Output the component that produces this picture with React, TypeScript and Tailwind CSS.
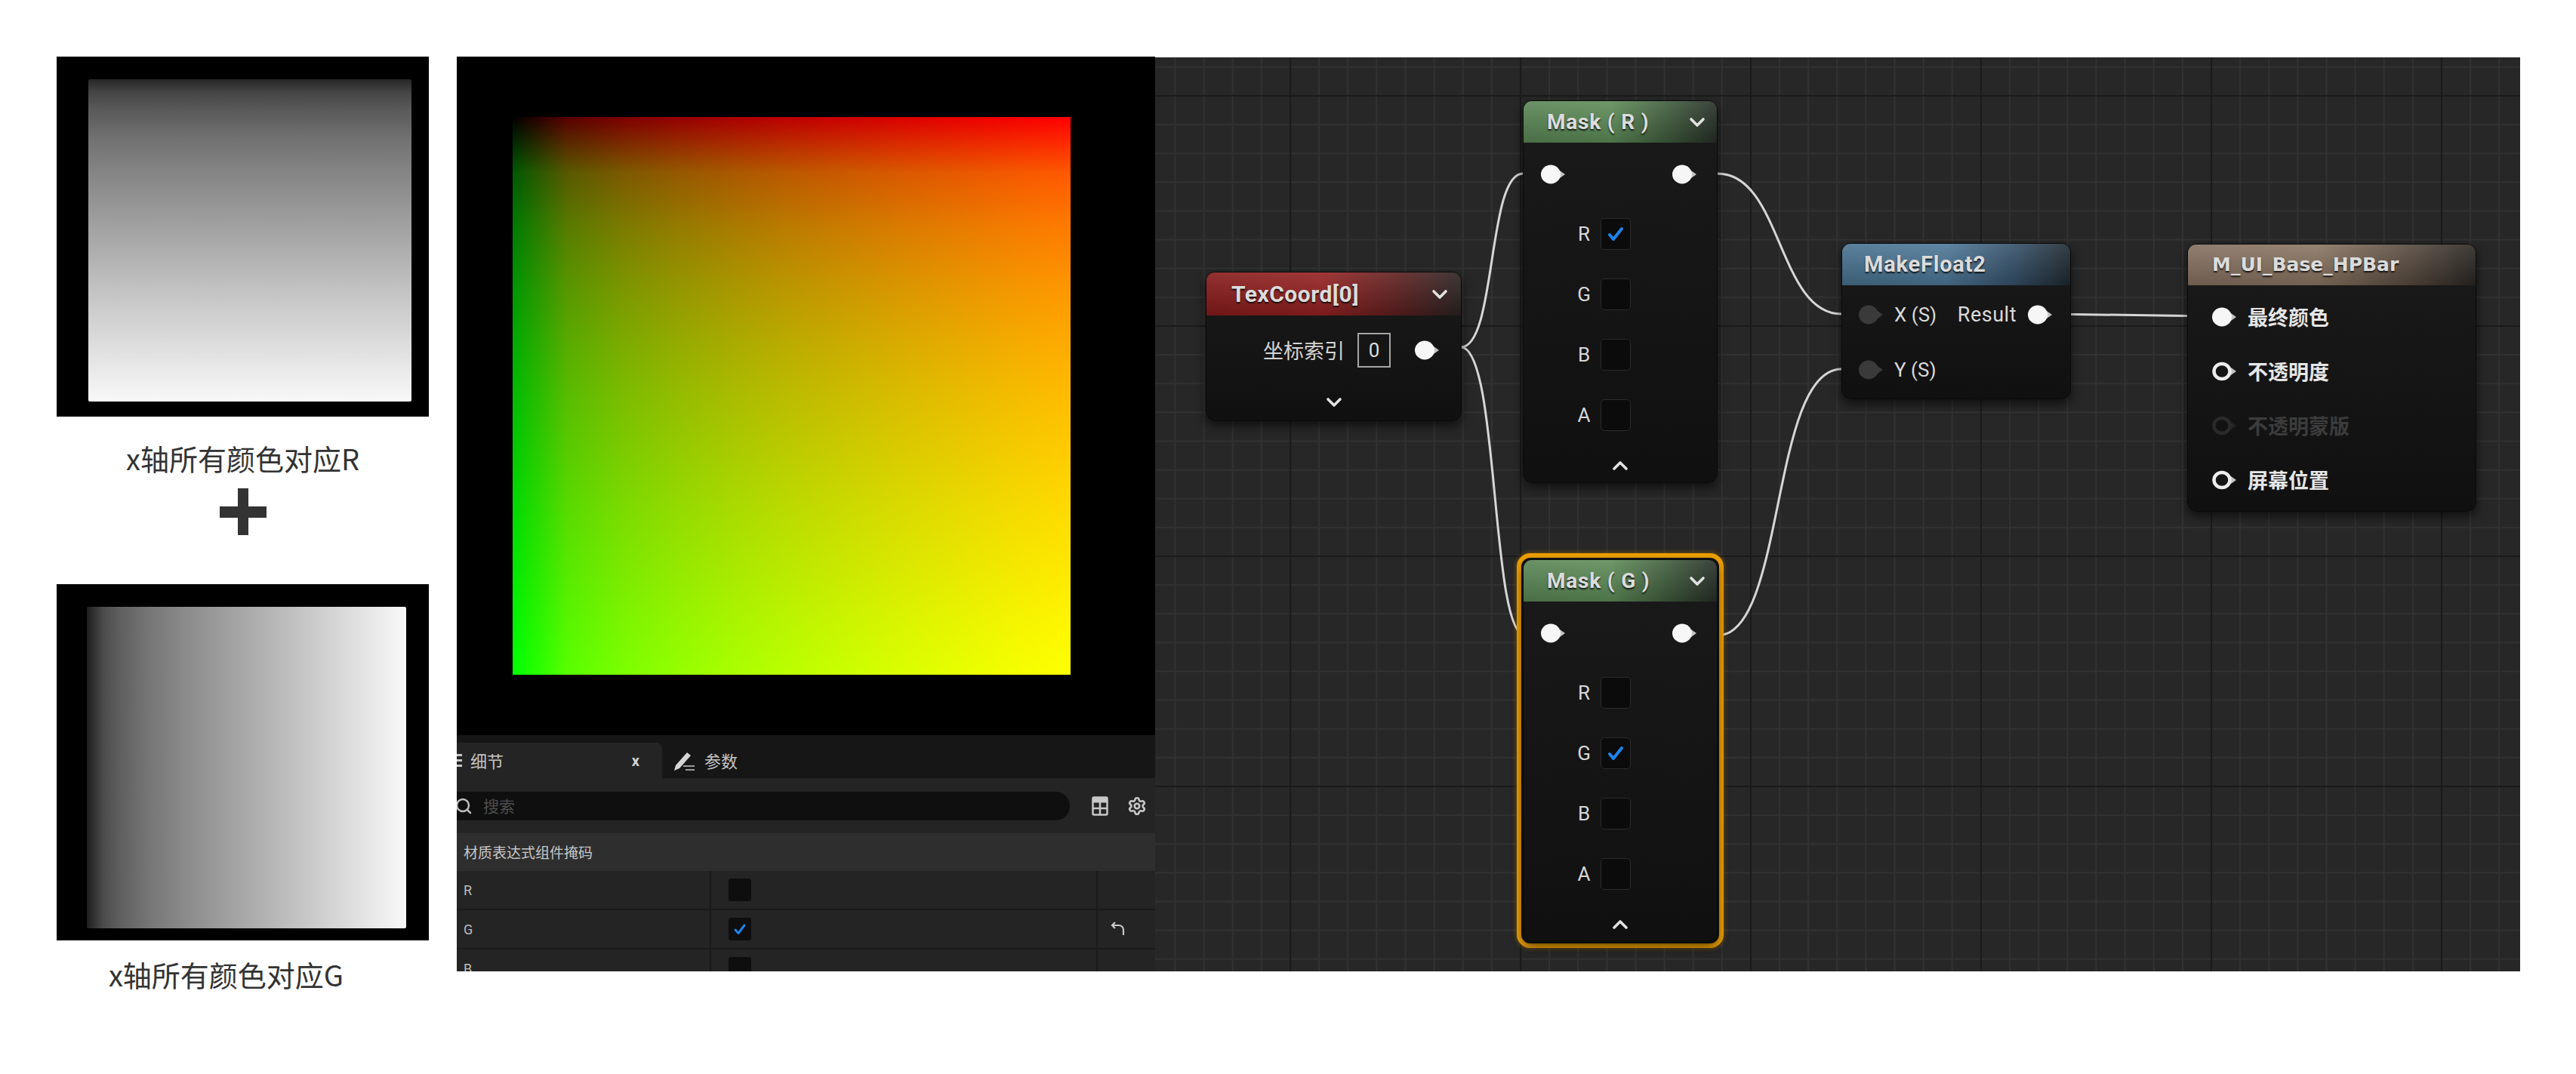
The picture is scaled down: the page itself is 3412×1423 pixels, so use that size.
import React from "react";
import { Search, Settings } from "lucide-react";

function Chevron({ up = false }: { up?: boolean }) {
  return (
    <svg width="24" height="14" viewBox="0 0 24 14" className="shrink-0">
      <path
        d={up ? "M4 12 L12 4 L20 12" : "M4 3 L12 11 L20 3"}
        fill="none"
        stroke="#e2e2e2"
        strokeWidth="3.6"
        strokeLinecap="round"
        strokeLinejoin="round"
      />
    </svg>
  );
}

function Check({ on = false }: { on?: boolean }) {
  return (
    <div className="w-[40px] h-[42px] rounded-[5px] bg-[#0b0b0b] border border-[#2b2b2b] flex items-center justify-center shrink-0">
      {on && (
        <svg width="26" height="26" viewBox="0 0 26 26">
          <path d="M5 14 L10 20 L21 6" fill="none" stroke="#1d84ee" strokeWidth="4" strokeLinecap="round" strokeLinejoin="round" />
        </svg>
      )}
    </div>
  );
}

function Pin({ kind }: { kind: "white" | "dark" | "ring" | "dim" }) {
  const tri = kind === "dark" ? "#3a3a3a" : kind === "dim" ? "#262626" : "#c4c4c4";
  return (
    <svg width="34" height="28" viewBox="0 0 34 28" className="shrink-0">
      <path d="M25 9 L32 14 L25 19 Z" fill={tri} />
      {kind === "white" && <ellipse cx="13" cy="14" rx="13" ry="12.5" fill="#f6f6f6" />}
      {kind === "dark" && <ellipse cx="13" cy="14" rx="13" ry="12.5" fill="#3a3a3a" />}
      {kind === "ring" && <ellipse cx="13" cy="14" rx="10.5" ry="10" fill="#151515" stroke="#ededed" strokeWidth="4.5" />}
      {kind === "dim" && <ellipse cx="13" cy="14" rx="10.5" ry="10" fill="#121212" stroke="#2a2a2a" strokeWidth="4.5" />}
    </svg>
  );
}

function MaskNode({ channel }: { channel: "R" | "G" }) {
  const rows: { l: string; on: boolean }[] = [
    { l: "R", on: channel === "R" },
    { l: "G", on: channel === "G" },
    { l: "B", on: false },
    { l: "A", on: false },
  ];
  return (
    <div className="w-[258px] h-[507px] rounded-[12px] overflow-hidden bg-[linear-gradient(to_bottom,#1a1a1a,#101010)] border border-[#0a0a0a] shadow-[0_6px_14px_rgba(0,0,0,0.6)] flex flex-col">
      <div className="h-[55px] shrink-0 flex items-center justify-between pl-[31px] pr-[14px] bg-[linear-gradient(to_bottom,rgba(255,255,255,0.10),rgba(0,0,0,0.18)),linear-gradient(to_right,#5a8655_0%,#5e8c58_45%,#3f5b3c_75%,#262e27_100%)]">
        <span className="font-['Roboto',sans-serif] font-bold text-[28px] tracking-[0.8px] text-[#dcdcdc] [text-shadow:0_2px_2px_rgba(0,0,0,0.8)]">
          Mask ( {channel} )
        </span>
        <Chevron />
      </div>
      <div className="h-[40px] mt-[22px] shrink-0 flex items-center justify-between pl-[23px] pr-[25px]">
        <Pin kind="white" />
        <Pin kind="white" />
      </div>
      <div className="mt-[19px] flex flex-col">
        {rows.map((r) => (
          <div key={r.l} className="h-[80px] flex items-center pl-[70px]">
            <span className="w-[20px] text-center font-['Roboto',sans-serif] text-[26px] text-[#d8d8d8]">{r.l}</span>
            <div className="ml-[12px]">
              <Check on={r.on} />
            </div>
          </div>
        ))}
      </div>
      <div className="mt-[19px] flex justify-center">
        <Chevron up />
      </div>
    </div>
  );
}

function LeftColumn() {
  return (
    <div className="w-[493px] flex flex-col items-center shrink-0">
      <div className="w-[493px] h-[477px] bg-black pl-[42px] pr-[23px] pt-[30px] pb-[20px]">
        <div className="w-full h-full rounded-[2px] bg-[linear-gradient(to_bottom,#262626_0%,#454545_4%,#585858_9%,#707070_18%,#838383_28%,#949494_38%,#a5a5a5_48%,#b6b6b6_58%,#c7c7c7_68%,#d8d8d8_79%,#e9e9e9_90%,#f8f8f8_100%)]" />
      </div>
      <div className="mt-[30px] text-[38px] leading-[50px] text-[#333333] font-['Noto_Sans_CJK_SC',sans-serif]">
        x轴所有颜色对应R
      </div>
      <svg className="mt-[15px]" width="62" height="62" viewBox="0 0 62 62">
        <rect x="0" y="24" width="62" height="15" fill="#333333" />
        <rect x="24" y="0" width="14" height="62" fill="#333333" />
      </svg>
      <div className="mt-[65px] w-[493px] h-[472px] bg-black pl-[40px] pr-[30px] pt-[30px] pb-[16px]">
        <div className="w-full h-full rounded-[2px] bg-[linear-gradient(to_right,#1e1e1e_0%,#4a4a4a_5%,#5e5e5e_10%,#777777_20%,#898989_30%,#999999_40%,#a9a9a9_50%,#b9b9b9_60%,#c9c9c9_70%,#d9d9d9_80%,#e9e9e9_90%,#f8f8f8_100%)]" />
      </div>
      <div className="mt-[20px] pr-[44px] text-[38px] leading-[50px] text-[#333333] font-['Noto_Sans_CJK_SC',sans-serif]">
        x轴所有颜色对应G
      </div>
    </div>
  );
}

function Details() {
  const rows: { l: string; on: boolean; reset: boolean }[] = [
    { l: "R", on: false, reset: false },
    { l: "G", on: true, reset: true },
    { l: "B", on: false, reset: false },
  ];
  return (
    <div className="flex-1 bg-[#242424] flex flex-col overflow-hidden font-['Noto_Sans_CJK_SC',sans-serif]">
      <div className="h-[57px] bg-[#161616] flex items-end shrink-0">
        <div className="w-[272px] h-[47px] bg-[#242424] rounded-tr-[8px] flex items-center pr-[30px] overflow-hidden">
          <svg width="20" height="24" viewBox="0 0 20 24" className="-ml-[11px] shrink-0">
            <rect x="2" y="3" width="16" height="3" fill="#c8c8c8" />
            <rect x="2" y="10" width="16" height="3" fill="#c8c8c8" />
            <rect x="2" y="17" width="16" height="3" fill="#c8c8c8" />
          </svg>
          <span className="ml-[9px] text-[22px] text-[#c4c4c4]">细节</span>
          <span className="ml-auto text-[20px] font-bold text-[#d0d0d0] font-['Roboto',sans-serif]">x</span>
        </div>
        <div className="h-[47px] flex items-center pl-[13px]">
          <svg width="32" height="30" viewBox="0 0 32 30" className="shrink-0">
            <path d="M3 28 L5 21 L20 4 L25 8 L10 25 Z" fill="#d6d6d6" />
            <path d="M15 22 H30 M18 27 H30" stroke="#9a9a9a" strokeWidth="2" />
          </svg>
          <span className="ml-[11px] text-[22px] text-[#c4c4c4]">参数</span>
        </div>
      </div>
      <div className="h-[73px] flex items-center shrink-0">
        <div className="w-[812px] h-[38px] bg-[#0f0f0f] rounded-r-full flex items-center">
          <Search size={24} strokeWidth={2.5} color="#bdbdbd" className="-ml-[3px]" />
          <span className="ml-[14px] text-[21px] text-[#4e4e4e]">搜索</span>
        </div>
        <svg width="22" height="26" viewBox="0 0 22 26" className="ml-[29px] shrink-0">
          <rect x="1.5" y="1.5" width="19" height="23" rx="1.5" fill="none" stroke="#c8c8c8" strokeWidth="2.5" />
          <rect x="1.5" y="1.5" width="19" height="7" fill="#c8c8c8" />
          <path d="M1.5 16 H20.5 M11 8 V24.5" stroke="#c8c8c8" strokeWidth="2.5" />
        </svg>
        <Settings size={26} strokeWidth={2.4} color="#c8c8c8" className="ml-[25px]" />
      </div>
      <div className="h-[50px] bg-[#2e2e2e] flex items-center pl-[9px] text-[19px] text-[#c8c8c8] shrink-0">
        材质表达式组件掩码
      </div>
      {rows.map((r) => (
        <div key={r.l} className="h-[52px] shrink-0 flex border-b-2 border-[#1a1a1a]">
          <div className="w-[337px] border-r-2 border-[#1a1a1a] flex items-center pl-[9px] text-[18px] text-[#bdbdbd] font-['Roboto',sans-serif]">
            {r.l}
          </div>
          <div className="w-[512px] border-r-2 border-[#1a1a1a] flex items-center pl-[23px]">
            <div className="w-[30px] h-[30px] rounded-[3px] bg-[#0e0e0e] flex items-center justify-center">
              {r.on && (
                <svg width="20" height="20" viewBox="0 0 20 20">
                  <path d="M4 11 L8 15.5 L16 5" fill="none" stroke="#1d84ee" strokeWidth="3" strokeLinecap="round" strokeLinejoin="round" />
                </svg>
              )}
            </div>
          </div>
          <div className="flex-1 flex items-center pl-[16px]">
            {r.reset && (
              <svg width="22" height="24" viewBox="0 0 22 24">
                <path d="M3 7 H12 A6 6 0 0 1 18 13 V20" fill="none" stroke="#c8c8c8" strokeWidth="2.2" />
                <path d="M7 3 L3 7 L7 11" fill="none" stroke="#c8c8c8" strokeWidth="2.2" />
              </svg>
            )}
          </div>
        </div>
      ))}
    </div>
  );
}

function MiddlePanel() {
  return (
    <div className="w-[925px] h-[1212px] flex flex-col shrink-0">
      <div className="h-[899px] shrink-0 bg-black pl-[74px] pt-[80px]">
        <div className="w-[739px] h-[739px] bg-blend-screen bg-[linear-gradient(to_right,#000000_0%,#590000_10%,#7c0000_20%,#950000_30%,#aa0000_40%,#bc0000_50%,#cb0000_60%,#da0000_70%,#e70000_80%,#f40000_90%,#ff0000_100%),linear-gradient(to_bottom,#000000_0%,#005900_10%,#007c00_20%,#009500_30%,#00aa00_40%,#00bc00_50%,#00cb00_60%,#00da00_70%,#00e700_80%,#00f400_90%,#00ff00_100%)]" />
      </div>
      <Details />
    </div>
  );
}

function Graph() {
  return (
    <div className="relative w-[1808px] h-[1211px] mt-[1px] overflow-hidden shrink-0 bg-[#272727] [background-image:linear-gradient(to_right,#1a1a1a_2px,transparent_2px),linear-gradient(to_bottom,#1a1a1a_2px,transparent_2px),linear-gradient(to_right,#323232_2px,transparent_2px),linear-gradient(to_bottom,#323232_2px,transparent_2px)] [background-size:305px_305px,305px_305px,38.125px_38.125px,38.125px_38.125px] [background-position:178px_50px,178px_50px,178px_50px,178px_50px]">
      <svg className="absolute left-0 top-0" width="1808" height="1211" viewBox="0 0 1808 1211">
        <g fill="none" stroke="#d6d6d6" strokeWidth="3">
          <path d="M380 384 L405 384 C452 384, 440 154, 487 154 L512 154" />
          <path d="M405 384 C456 384, 444 766, 490 766 L514 766" />
          <path d="M712 154 L745 154 C830 154, 825 340, 909 340 L934 340" />
          <path d="M712 766 L745 766 C835 766, 815 413, 909 413 L934 413" />
          <path d="M1185 340 L1400 343" />
        </g>
      </svg>

      {/* TexCoord */}
      <div className="absolute left-[67px] top-[284px] w-[339px] h-[198px] rounded-[12px] overflow-hidden bg-[linear-gradient(to_bottom,#1a1a1a,#101010)] border border-[#0a0a0a] shadow-[0_6px_14px_rgba(0,0,0,0.6)] flex flex-col">
        <div className="h-[57px] shrink-0 flex items-center justify-between pl-[33px] pr-[16px] bg-[linear-gradient(to_bottom,rgba(255,255,255,0.10),rgba(0,0,0,0.18)),linear-gradient(to_right,#861a1a_0%,#962121_45%,#5e1f1f_75%,#2a2222_100%)]">
          <span className="font-['Roboto',sans-serif] font-bold text-[30px] tracking-[0.5px] text-[#dcdcdc] [text-shadow:0_2px_2px_rgba(0,0,0,0.8)]">
            TexCoord[0]
          </span>
          <Chevron />
        </div>
        <div className="h-[60px] mt-[16px] shrink-0 flex items-center justify-end pr-[27px]">
          <span className="text-[27px] text-[#d4d4d4] font-['Noto_Sans_CJK_SC',sans-serif]">坐标索引</span>
          <div className="ml-[17px] w-[44px] h-[46px] border-2 border-[#a6a6a6] flex items-center justify-center text-[26px] text-[#dcdcdc] font-['Roboto',sans-serif]">
            0
          </div>
          <div className="ml-[32px]">
            <Pin kind="white" />
          </div>
        </div>
        <div className="mt-[32px] flex justify-center">
          <Chevron />
        </div>
      </div>

      {/* Mask R */}
      <div className="absolute left-[487px] top-[57px]">
        <MaskNode channel="R" />
      </div>

      {/* Mask G selected */}
      <div className="absolute left-[479px] top-[657px] rounded-[18px] border-[6px] border-[#eea000] p-[2px] bg-[#141414] shadow-[0_0_6px_rgba(240,150,0,0.5)]">
        <MaskNode channel="G" />
      </div>

      {/* MakeFloat2 */}
      <div className="absolute left-[909px] top-[246px] w-[304px] h-[207px] rounded-[12px] overflow-hidden bg-[linear-gradient(to_bottom,#1a1a1a,#101010)] border border-[#0a0a0a] shadow-[0_6px_14px_rgba(0,0,0,0.6)] flex flex-col">
        <div className="h-[55px] shrink-0 flex items-center pl-[29px] bg-[linear-gradient(to_bottom,rgba(255,255,255,0.10),rgba(0,0,0,0.18)),linear-gradient(to_right,#48728f_0%,#4e7898_45%,#35516a_75%,#1f282f_100%)]">
          <span className="font-['Roboto',sans-serif] font-bold text-[29px] tracking-[0.8px] text-[#dcdcdc] [text-shadow:0_2px_2px_rgba(0,0,0,0.8)]">
            MakeFloat2
          </span>
        </div>
        <div className="h-[40px] mt-[19px] shrink-0 flex items-center pl-[22px] pr-[22px]">
          <Pin kind="dark" />
          <span className="ml-[13px] font-['Roboto',sans-serif] text-[26px] text-[#dadada]">X (S)</span>
          <span className="ml-auto font-['Roboto',sans-serif] text-[27px] text-[#dadada] tracking-[0.5px]">Result</span>
          <div className="ml-[15px]">
            <Pin kind="white" />
          </div>
        </div>
        <div className="h-[40px] mt-[33px] shrink-0 flex items-center pl-[22px]">
          <Pin kind="dark" />
          <span className="ml-[13px] font-['Roboto',sans-serif] text-[26px] text-[#dadada]">Y (S)</span>
        </div>
      </div>

      {/* M_UI_Base_HPBar */}
      <div className="absolute left-[1367px] top-[247px] w-[383px] h-[355px] rounded-[12px] overflow-hidden bg-[linear-gradient(to_bottom,#1a1a1a,#101010)] border border-[#0a0a0a] shadow-[0_6px_14px_rgba(0,0,0,0.6)] flex flex-col">
        <div className="h-[54px] shrink-0 flex items-center pl-[32px] bg-[linear-gradient(to_bottom,rgba(255,255,255,0.10),rgba(0,0,0,0.18)),linear-gradient(to_right,#857060_0%,#8a7562_45%,#5b4d41_75%,#2a2623_100%)]">
          <span className="font-['DejaVu_Sans',sans-serif] font-bold text-[25px] text-[#dcdcdc] [text-shadow:0_2px_2px_rgba(0,0,0,0.8)]">
            M_UI_Base_HPBar
          </span>
        </div>
        <div className="mt-[6px] flex flex-col">
          {[
            { t: "最终颜色", k: "white" as const, c: "text-[#e6e6e6]" },
            { t: "不透明度", k: "ring" as const, c: "text-[#e6e6e6]" },
            { t: "不透明蒙版", k: "dim" as const, c: "text-[#3c3c3c]" },
            { t: "屏幕位置", k: "ring" as const, c: "text-[#e6e6e6]" },
          ].map((r) => (
            <div key={r.t} className="h-[72px] flex items-center pl-[32px]">
              <Pin kind={r.k} />
              <span className={"ml-[13px] text-[27px] font-bold font-['Noto_Sans_CJK_SC',sans-serif] " + r.c}>{r.t}</span>
            </div>
          ))}
        </div>
      </div>
    </div>
  );
}

export default function App() {
  return (
    <div className="w-[3412px] h-[1423px] bg-white flex items-start pt-[75px] pl-[75px] overflow-hidden">
      <LeftColumn />
      <div className="ml-[37px] flex items-start">
        <MiddlePanel />
        <Graph />
      </div>
    </div>
  );
}
